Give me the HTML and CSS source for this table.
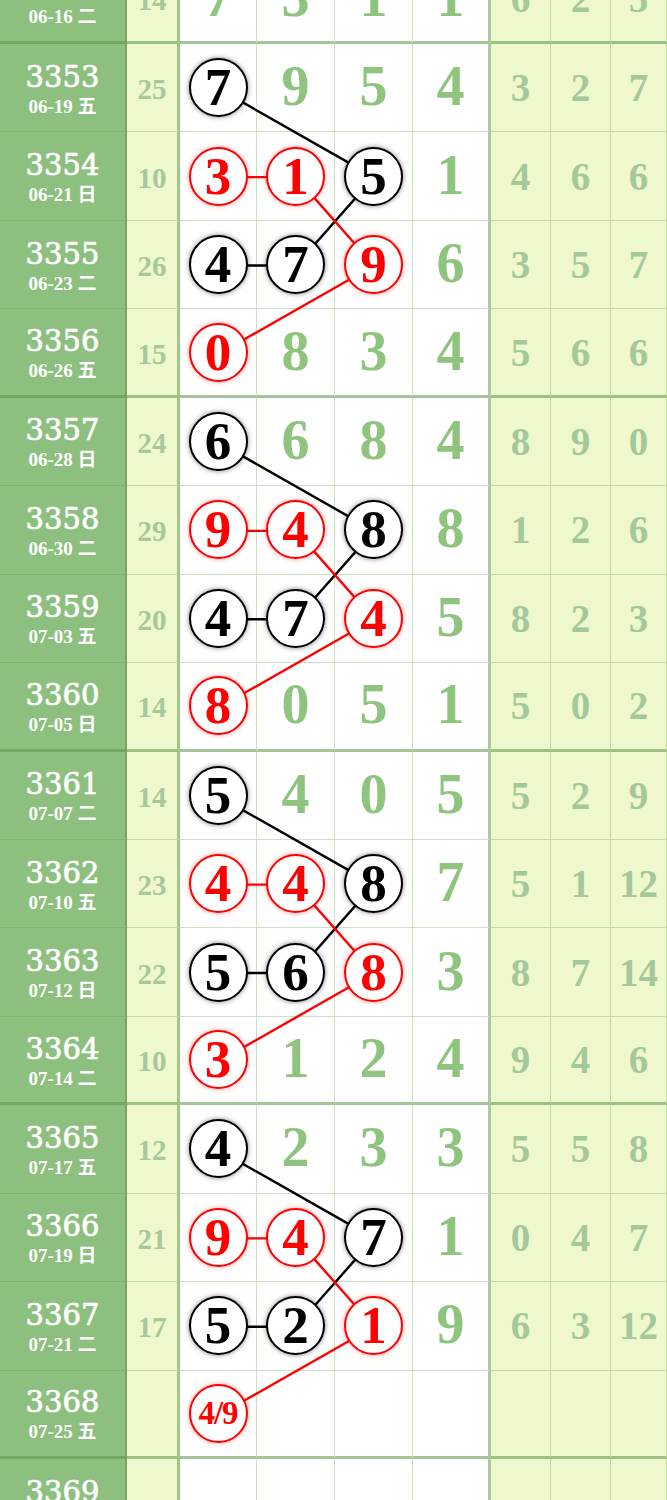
FILE: index.html
```html
<!DOCTYPE html>
<html>
<head>
	<meta charset="utf-8">
	<title>走势图</title>
	<link rel="stylesheet" href="styles.css">
</head>
<body>
<div class="chart">
	<svg class="links" width="667" height="1592" viewBox="0 0 667 1592">
		<g stroke="#000" stroke-width="2.4">
			<line x1="218.5" y1="132.66" x2="374" y2="221.1"/>
			<line x1="374" y1="221.1" x2="296" y2="309.54"/>
			<line x1="218.5" y1="309.54" x2="296" y2="309.54"/>
			<line x1="218.5" y1="486.42" x2="374" y2="574.86"/>
			<line x1="374" y1="574.86" x2="296" y2="663.3"/>
			<line x1="218.5" y1="663.3" x2="296" y2="663.3"/>
			<line x1="218.5" y1="840.18" x2="374" y2="928.62"/>
			<line x1="374" y1="928.62" x2="296" y2="1017.06"/>
			<line x1="218.5" y1="1017.06" x2="296" y2="1017.06"/>
			<line x1="218.5" y1="1193.94" x2="374" y2="1282.38"/>
			<line x1="374" y1="1282.38" x2="296" y2="1370.82"/>
			<line x1="218.5" y1="1370.82" x2="296" y2="1370.82"/>
		</g>
		<g stroke="#f00" stroke-width="2.4">
			<line x1="218.5" y1="221.1" x2="296" y2="221.1"/>
			<line x1="296" y1="221.1" x2="374" y2="309.54"/>
			<line x1="374" y1="309.54" x2="218.5" y2="397.98"/>
			<line x1="218.5" y1="574.86" x2="296" y2="574.86"/>
			<line x1="296" y1="574.86" x2="374" y2="663.3"/>
			<line x1="374" y1="663.3" x2="218.5" y2="751.74"/>
			<line x1="218.5" y1="928.62" x2="296" y2="928.62"/>
			<line x1="296" y1="928.62" x2="374" y2="1017.06"/>
			<line x1="374" y1="1017.06" x2="218.5" y2="1105.5"/>
			<line x1="218.5" y1="1282.38" x2="296" y2="1282.38"/>
			<line x1="296" y1="1282.38" x2="374" y2="1370.82"/>
			<line x1="374" y1="1370.82" x2="218.5" y2="1459.26"/>
		</g>
	</svg>

	<div class="row end">
		<div class="issue"><b>3352</b><span>06-16 二</span></div>
		<div class="sum">14</div>
		<div class="pos">7</div><div class="pos">3</div><div class="pos">1</div><div class="pos">1</div>
		<div class="dist">6</div><div class="dist">2</div><div class="dist">5</div>
	</div>

	<div class="row">
		<div class="issue"><b>3353</b><span>06-19 五</span></div>
		<div class="sum">25</div>
		<div class="pos"><span class="ball">7</span></div><div class="pos">9</div><div class="pos">5</div><div class="pos">4</div>
		<div class="dist">3</div><div class="dist">2</div><div class="dist">7</div>
	</div>
	<div class="row">
		<div class="issue"><b>3354</b><span>06-21 日</span></div>
		<div class="sum">10</div>
		<div class="pos"><span class="ball red">3</span></div><div class="pos"><span class="ball red">1</span></div><div class="pos"><span class="ball">5</span></div><div class="pos">1</div>
		<div class="dist">4</div><div class="dist">6</div><div class="dist">6</div>
	</div>
	<div class="row">
		<div class="issue"><b>3355</b><span>06-23 二</span></div>
		<div class="sum">26</div>
		<div class="pos"><span class="ball">4</span></div><div class="pos"><span class="ball">7</span></div><div class="pos"><span class="ball red">9</span></div><div class="pos">6</div>
		<div class="dist">3</div><div class="dist">5</div><div class="dist">7</div>
	</div>
	<div class="row end">
		<div class="issue"><b>3356</b><span>06-26 五</span></div>
		<div class="sum">15</div>
		<div class="pos"><span class="ball red">0</span></div><div class="pos">8</div><div class="pos">3</div><div class="pos">4</div>
		<div class="dist">5</div><div class="dist">6</div><div class="dist">6</div>
	</div>

	<div class="row">
		<div class="issue"><b>3357</b><span>06-28 日</span></div>
		<div class="sum">24</div>
		<div class="pos"><span class="ball">6</span></div><div class="pos">6</div><div class="pos">8</div><div class="pos">4</div>
		<div class="dist">8</div><div class="dist">9</div><div class="dist">0</div>
	</div>
	<div class="row">
		<div class="issue"><b>3358</b><span>06-30 二</span></div>
		<div class="sum">29</div>
		<div class="pos"><span class="ball red">9</span></div><div class="pos"><span class="ball red">4</span></div><div class="pos"><span class="ball">8</span></div><div class="pos">8</div>
		<div class="dist">1</div><div class="dist">2</div><div class="dist">6</div>
	</div>
	<div class="row">
		<div class="issue"><b>3359</b><span>07-03 五</span></div>
		<div class="sum">20</div>
		<div class="pos"><span class="ball">4</span></div><div class="pos"><span class="ball">7</span></div><div class="pos"><span class="ball red">4</span></div><div class="pos">5</div>
		<div class="dist">8</div><div class="dist">2</div><div class="dist">3</div>
	</div>
	<div class="row end">
		<div class="issue"><b>3360</b><span>07-05 日</span></div>
		<div class="sum">14</div>
		<div class="pos"><span class="ball red">8</span></div><div class="pos">0</div><div class="pos">5</div><div class="pos">1</div>
		<div class="dist">5</div><div class="dist">0</div><div class="dist">2</div>
	</div>

	<div class="row">
		<div class="issue"><b>3361</b><span>07-07 二</span></div>
		<div class="sum">14</div>
		<div class="pos"><span class="ball">5</span></div><div class="pos">4</div><div class="pos">0</div><div class="pos">5</div>
		<div class="dist">5</div><div class="dist">2</div><div class="dist">9</div>
	</div>
	<div class="row">
		<div class="issue"><b>3362</b><span>07-10 五</span></div>
		<div class="sum">23</div>
		<div class="pos"><span class="ball red">4</span></div><div class="pos"><span class="ball red">4</span></div><div class="pos"><span class="ball">8</span></div><div class="pos">7</div>
		<div class="dist">5</div><div class="dist">1</div><div class="dist">12</div>
	</div>
	<div class="row">
		<div class="issue"><b>3363</b><span>07-12 日</span></div>
		<div class="sum">22</div>
		<div class="pos"><span class="ball">5</span></div><div class="pos"><span class="ball">6</span></div><div class="pos"><span class="ball red">8</span></div><div class="pos">3</div>
		<div class="dist">8</div><div class="dist">7</div><div class="dist">14</div>
	</div>
	<div class="row end">
		<div class="issue"><b>3364</b><span>07-14 二</span></div>
		<div class="sum">10</div>
		<div class="pos"><span class="ball red">3</span></div><div class="pos">1</div><div class="pos">2</div><div class="pos">4</div>
		<div class="dist">9</div><div class="dist">4</div><div class="dist">6</div>
	</div>

	<div class="row">
		<div class="issue"><b>3365</b><span>07-17 五</span></div>
		<div class="sum">12</div>
		<div class="pos"><span class="ball">4</span></div><div class="pos">2</div><div class="pos">3</div><div class="pos">3</div>
		<div class="dist">5</div><div class="dist">5</div><div class="dist">8</div>
	</div>
	<div class="row">
		<div class="issue"><b>3366</b><span>07-19 日</span></div>
		<div class="sum">21</div>
		<div class="pos"><span class="ball red">9</span></div><div class="pos"><span class="ball red">4</span></div><div class="pos"><span class="ball">7</span></div><div class="pos">1</div>
		<div class="dist">0</div><div class="dist">4</div><div class="dist">7</div>
	</div>
	<div class="row">
		<div class="issue"><b>3367</b><span>07-21 二</span></div>
		<div class="sum">17</div>
		<div class="pos"><span class="ball">5</span></div><div class="pos"><span class="ball">2</span></div><div class="pos"><span class="ball red">1</span></div><div class="pos">9</div>
		<div class="dist">6</div><div class="dist">3</div><div class="dist">12</div>
	</div>
	<div class="row end">
		<div class="issue"><b>3368</b><span>07-25 五</span></div>
		<div class="sum"></div>
		<div class="pos"><span class="ball red guess">4/9</span></div><div class="pos"></div><div class="pos"></div><div class="pos"></div>
		<div class="dist"></div><div class="dist"></div><div class="dist"></div>
	</div>

	<div class="row">
		<div class="issue"><b>3369</b><span>07-28 日</span></div>
		<div class="sum"></div>
		<div class="pos"></div><div class="pos"></div><div class="pos"></div><div class="pos"></div>
		<div class="dist"></div><div class="dist"></div><div class="dist"></div>
	</div>
</div>
</body>
</html>
```

FILE: styles.css
```css
html, body {
	background: #fff;
	margin: 0;
	padding: 0;
	overflow: hidden;
}
body {
	font-family: "Liberation Serif", "Noto Sans CJK SC", serif;
	width: 667px;
}
.chart {
	margin-top: -44.44px;
	position: relative;
}
.links {
	left: 0;
	pointer-events: none;
	position: absolute;
	top: 0;
	z-index: 1;
}
.row {
	display: grid;
	grid-template-columns: 127px 53px 77px 78px 78px 78px 60px 60px 56px;
	height: 88.44px;
}
.row > div {
	align-items: center;
	border-bottom: 1px solid rgba(100,165,80,.35);
	border-right: 1px solid rgba(100,165,80,.35);
	box-sizing: border-box;
	display: flex;
	justify-content: center;
}
.row.end > div {
	border-bottom: 3px solid rgba(90,150,70,.55);
}
.issue {
	background: #8dc07f;
	border-right: 2px solid rgba(60,110,40,.3) !important;
	color: #fff;
	flex-direction: column;
	padding-top: 2px;
}
.issue b {
	font-family: "DejaVu Serif", serif;
	font-size: 29px;
	font-weight: normal;
	line-height: 36px;
	-webkit-text-stroke: 0.7px #fff;
}
.issue span {
	font-size: 19px;
	font-weight: bold;
	line-height: 24px;
}
.sum {
	background: #eff8cc;
	border-right: 3px solid rgba(90,150,70,.5) !important;
	color: #a6c89b;
	font-size: 29px;
	font-weight: bold;
	padding-top: 4px;
}
.pos {
	background: #fff;
	color: #8fc47f;
	font-size: 56px;
	font-weight: bold;
	padding-bottom: 3px;
}
.pos:nth-child(6) {
	border-right: 3px solid rgba(90,150,70,.5) !important;
}
.dist {
	background: #eff8cc;
	color: #a4c89a;
	font-size: 39px;
	font-weight: bold;
}
.ball {
	align-items: center;
	background: #fff;
	border: 2.5px solid #000;
	border-radius: 50%;
	box-shadow: 0 0 5px rgba(0,0,0,.5);
	box-sizing: border-box;
	color: #000;
	display: flex;
	font-size: 53px;
	height: 59px;
	justify-content: center;
	line-height: 1;
	margin-top: 3px;
	position: relative;
	width: 59px;
	z-index: 2;
}
.ball.red {
	border-color: #f00;
	box-shadow: 0 0 5px rgba(255,0,0,.4);
	color: #f00;
}
.ball.guess {
	font-size: 33px;
	letter-spacing: -1px;
}
```
